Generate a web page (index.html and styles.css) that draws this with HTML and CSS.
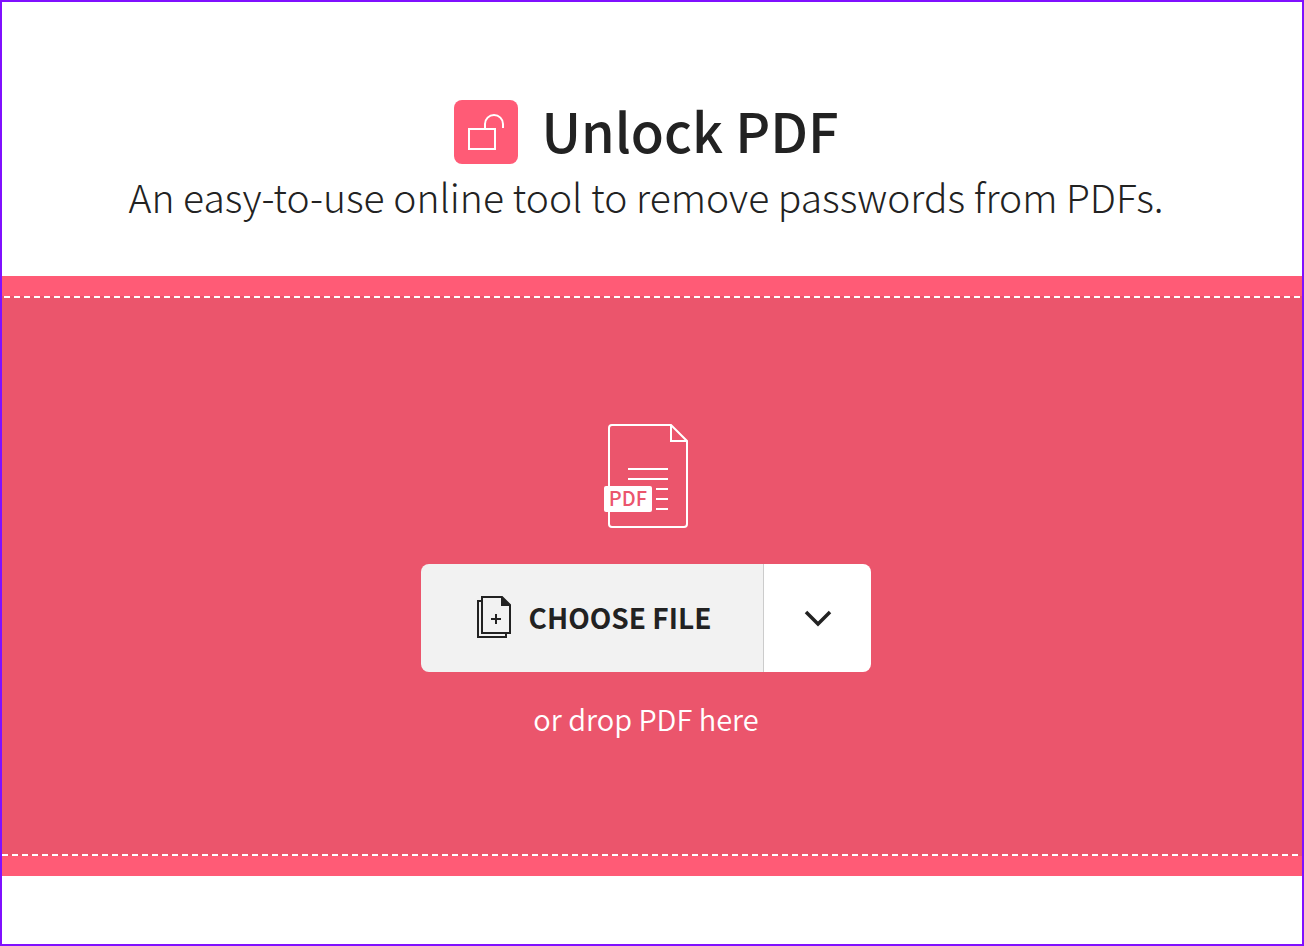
FILE: index.html
```
<!DOCTYPE html>
<html lang="en">
<head>
<meta charset="UTF-8">
<meta name="viewport" content="width=device-width, initial-scale=1.0">
<title>Unlock PDF</title>
<link rel="stylesheet" href="styles.css">
</head>
<body>

<div class="page">
  <header class="header">
    <div class="title-row">
      <svg class="tool-icon" viewBox="0 0 64 64" aria-hidden="true">
        <rect width="64" height="64" rx="8" fill="#ff5b76"/>
        <path d="M15 29H41V49H15ZM31 29V24A9 9 0 0 1 49 24V28" fill="none" stroke="#fff" stroke-width="2"/>
      </svg>
      <h1>Unlock PDF</h1>
    </div>
    <p class="subtitle">An easy-to-use online tool to remove passwords from PDFs.</p>
  </header>

  <!-- Upload area -->
  <main class="upload">
    <div class="drop-zone">
      <svg class="pdf-icon" viewBox="0 0 84 104" aria-hidden="true">
        <g fill="none" stroke="#fff" stroke-width="2">
          <path d="M67 1H8Q5 1 5 4V100Q5 103 8 103H80Q83 103 83 100V17L67 1V17H83"/>
          <path d="M24 45H64M24 55H64M52 65H64M52 75H64M52 85H64"/>
        </g>
        <rect y="62" width="48" height="26" rx="2" fill="#fff"/>
        <text class="pdf-label" x="24" y="82" text-anchor="middle">PDF</text>
      </svg>
      <div class="button-group">
        <button class="choose-button" type="button">
          <svg class="file-icon" viewBox="0 0 34 42" aria-hidden="true">
            <path d="M5 5H1V41H29V37M5 1H25L33 9V37H5ZM19 18V28M14 23H24" fill="none" stroke="#222" stroke-width="2"/>
            <path d="M24 0V10H34Z" fill="#222"/>
          </svg>
          CHOOSE FILE
        </button>
        <button class="more-button" type="button" aria-label="More sources">
          <svg class="chevron" viewBox="0 0 28 18" aria-hidden="true">
            <path d="M2 3L14 15L26 3" fill="none" stroke="#222" stroke-width="3.5"/>
          </svg>
        </button>
      </div>
      <p class="hint">or drop PDF here</p>
    </div>
  </main>
</div>

</body>
</html>
```
FILE: styles.css
```
* {
  box-sizing: border-box;
}
body, h1, p {
  margin: 0;
}
body {
  font-family: "Noto Sans CJK SC", "Noto Sans", sans-serif;
  color: #222;
  background: #fff;
}
.page {
  min-height: 100vh;
  border: 2px solid #8010ff;
}
.header {
  padding: 98px 12px 48px 0;
  text-align: center;
}
.title-row {
  display: flex;
  align-items: flex-start;
  justify-content: center;
  gap: 24px;
  height: 64px;
}
.tool-icon {
  width: 64px;
  height: 64px;
}
h1 {
  font-size: 54px;
  font-weight: 500;
  line-height: 60px;
}
.subtitle {
  font-size: 39px;
  font-weight: 300;
  line-height: 64px;
}
.upload {
  padding: 20px 0;
  background: #ff5b76;
}
.drop-zone {
  display: flex;
  flex-direction: column;
  align-items: center;
  padding: 128px 12px 120px 0;
  /* 6px dashes with 4px gaps along the top and bottom edges */
  background:
    repeating-linear-gradient(90deg, #fff 0 6px, transparent 6px 10px) 2px 0 / 100% 2px no-repeat,
    repeating-linear-gradient(90deg, #fff 0 6px, transparent 6px 10px) 0 100% / 100% 2px no-repeat,
    #eb556c;
}
.pdf-icon {
  width: 84px;
  height: 104px;
}
.pdf-label {
  font-size: 20px;
  font-weight: 500;
  fill: #eb556c;
}
.button-group {
  display: flex;
  height: 108px;
  margin-top: 36px;
  border-radius: 8px;
  overflow: hidden;
}
button {
  border: none;
  padding: 0;
  cursor: pointer;
}
.choose-button {
  display: flex;
  align-items: center;
  gap: 18px;
  padding: 0 52px 2px 56px;
  font: 700 28px "Noto Sans CJK SC", "Noto Sans", sans-serif;
  color: #222;
  background: #f2f2f2;
}
.file-icon {
  width: 34px;
  height: 42px;
}
.more-button {
  display: flex;
  align-items: center;
  justify-content: center;
  width: 108px;
  border-left: 1px solid #ccc;
  background: #fff;
}
.chevron {
  width: 28px;
  height: 18px;
}
.hint {
  margin-top: 28px;
  font-size: 29px;
  font-weight: 350;
  line-height: 36px;
  color: #fff;
}
```
